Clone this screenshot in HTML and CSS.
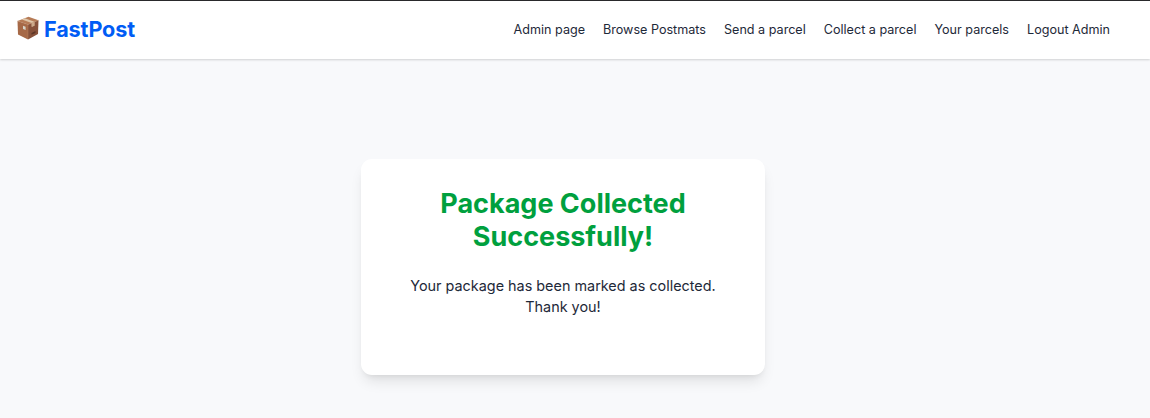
FILE: index.html
```html
<!DOCTYPE html>
<html lang="en">
<head>
<meta charset="utf-8">
<title>FastPost</title>
<link rel="stylesheet" href="styles.css">
</head>
<body>
<header class="navbar">
  <a class="brand">
    <svg class="brand-icon" viewBox="0 0 24 24" aria-hidden="true">
      <path fill="#b67b56" d="M1.5 5 12.5 .8 22.5 4.2 12 8.6z"/>
      <path fill="#a66947" d="M1.5 5 12 8.6v14.9L2 18.4z"/>
      <path fill="#87513a" d="M12 8.6 22.5 4.2 22 18 12 23.5z"/>
      <path fill="#dec5a8" d="M5.8 3.4 8.8 2.3 18.4 5.7v4.1l-2.7 1V7z"/>
      <path fill="#cda98a" d="m15.7 7 2.7-1.3v4.1l-2.7 1z"/>
      <path fill="#d6d5ca" d="m7 9.8 2.6 1v3.3L7 12.9z"/>
      <path fill="#5d3626" d="m15.5 17 4-1.9v1.8l-4 1.9z"/>
      <path fill="none" stroke="#bd8865" stroke-width=".4" d="m1.5 5 10.5 3.6 10.5-4.4M12 8.6V23"/>
    </svg>
    <span>FastPost</span>
  </a>
  <nav class="nav-links">
    <a>Admin page</a>
    <a>Browse Postmats</a>
    <a>Send a parcel</a>
    <a>Collect a parcel</a>
    <a>Your parcels</a>
    <a>Logout Admin</a>
  </nav>
</header>
<main class="page">
  <section class="card">
    <h1>Package Collected Successfully!</h1>
    <p>Your package has been marked as collected. Thank you!</p>
  </section>
</main>
</body>
</html>
```
FILE: styles.css
```css
* { box-sizing: border-box; }
body {
  margin: 0;
  height: 418px;
  overflow: hidden;
  background: #f8f9fb;
  color: #1e2939;
  font-family: Inter, sans-serif;
}
.navbar {
  position: relative;
  display: flex;
  align-items: center;
  justify-content: space-between;
  height: 59px;
  padding: 0 40px 2px 16px;
  border-top: 1px solid #29292b;
  background: #fff;
  box-shadow: 0 1px 2px rgba(0, 0, 0, .16);
}
.brand {
  display: flex;
  align-items: center;
  gap: 4px;
  color: #005cf5;
  font-size: 21.6px;
  font-weight: 700;
  letter-spacing: -.12px;
}
.brand-icon {
  width: 24px;
  height: 24px;
  margin-bottom: 2px;
}
.nav-links {
  display: flex;
  gap: 18px;
  font-size: 12.6px;
}
.page {
  display: flex;
  justify-content: center;
  padding: 100px 24px 0 0;
}
.card {
  width: 404px;
  height: 216px;
  padding: 28px 36px;
  border-radius: 11px;
  background: #fff;
  text-align: center;
  box-shadow: 0 9px 14px -3px rgba(0, 0, 0, .1), 0 4px 6px -4px rgba(0, 0, 0, .1);
}
.card h1 {
  margin: 0 0 22px;
  color: #00a03e;
  font-size: 27px;
  font-weight: 700;
  line-height: 33px;
}
.card p {
  margin: 0;
  font-size: 14.4px;
  line-height: 21px;
}
```
